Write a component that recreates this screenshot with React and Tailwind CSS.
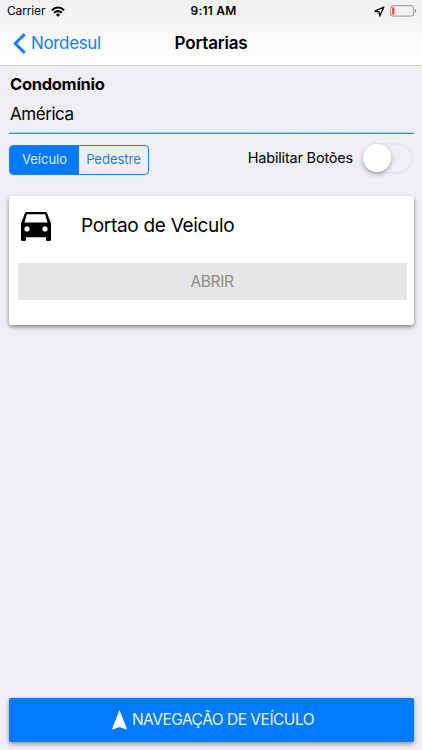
import React from 'react';

const StatusBar = () => (
  <div className="grid h-[22px] grid-cols-3 items-center pl-[7px] pr-[5px] text-[12px]">
    <div className="flex items-center gap-[6px]">
      <span className="tracking-[-0.15px]">Carrier</span>
      <svg width="14" height="11" viewBox="0 0 15 11" preserveAspectRatio="none" fill="none" stroke="black" strokeWidth="2.1">
        <path d="M1 4.2a9.3 9.3 0 0 1 13 0" />
        <path d="M3.4 6.8a5.8 5.8 0 0 1 8.2 0" />
        <path d="M7.5 10.9 5.3 8.6a3.2 3.2 0 0 1 4.4 0z" fill="black" stroke="none" />
      </svg>
    </div>
    <span className="pl-[3px] text-center font-semibold tracking-[0.2px]">9:11 AM</span>
    <div className="flex items-center justify-end gap-[5px]">
      <svg width="11" height="11" viewBox="0 0 11 11" fill="none" stroke="black" strokeWidth="1.3" strokeLinejoin="round">
        <path d="M9.9 1 .9 5.2l4.100.8.700 4.100z" />
      </svg>
      <svg width="27" height="12" viewBox="0 0 27 12">
        <rect x="0.7" y="0.7" width="23" height="10.4" rx="2.4" fill="none" stroke="#929292" />
        <rect x="2.2" y="2.3" width="2.2" height="7.2" rx="0.6" fill="#ff3b30" />
        <path d="M25 4c1.5.6 1.5 3.2 0 3.8z" fill="#929292" />
      </svg>
    </div>
  </div>
);

const NavBar = () => (
  <div className="grid h-[43px] grid-cols-3 items-center px-[13px]">
    <div className="flex items-center gap-[5px] text-[#157efb]">
      <svg width="13" height="21" viewBox="0 0 13 21" fill="none" stroke="currentColor" strokeWidth="2.9">
        <path d="M11.7 1.1 2.2 10.5l9.5 9.4" />
      </svg>
      <span className="text-[17px] tracking-[-0.35px]">Nordesul</span>
    </div>
    <h1 className="text-center text-[17px] font-semibold tracking-[-0.2px]">Portarias</h1>
  </div>
);

const CarIcon = () => (
  <svg width="30" height="29" viewBox="0 0 30 29">
    <path
      fillRule="evenodd"
      d="M6 0h18c1.200 0 2 .6 2.300 1.700L30 11.500v15.900c0 .9-.6 1.500-1.500 1.500h-2c-.9 0-1.500-.6-1.500-1.500V25.300H5v2.100c0 .9-.6 1.500-1.500 1.500h-2C.6 28.900 0 28.300 0 27.400V11.500L3.700 1.700C4 .6 4.800 0 6 0zM5.900 2.300 3.500 10.600h23l-2.400-8.300zM6 14.300a2.600 2.600 0 1 0 0 5.200 2.600 2.600 0 1 0 0-5.200zM24 14.300a2.600 2.600 0 1 0 0 5.200 2.600 2.600 0 1 0 0-5.200z"
    />
  </svg>
);

const App = () => {
  return (
    <div className="flex h-[750px] w-[422px] flex-col overflow-hidden whitespace-nowrap bg-[#efeef4] font-['Inter',sans-serif] text-black">
      <header className="h-[66px] border-b border-[#d0d0d3] bg-linear-to-b from-[#f0f0f0] to-white">
        <StatusBar />
        <NavBar />
      </header>

      <main className="flex flex-1 flex-col pr-[8px] pl-[9px]">
        {/* Condominium */}
        <div className="h-[66px] pt-[6px]">
          <p className="pl-px text-[16.5px] font-bold leading-[24px] tracking-[-0.3px]">Condomínio</p>
          <p className="mt-[6px] pl-px text-[17px] leading-[24px] tracking-[-0.45px]">América</p>
        </div>
        <div className="h-[2px] border-t border-[#a9ccf3] bg-[#388ff0]" />

        {/* Filter and switch */}
        <div className="flex h-[62px] justify-between pt-[8px]">
          <div className="mt-[3px] flex h-[30px] w-[140px] overflow-hidden rounded-[4px] border border-[#157efb] text-[13px]">
            <button className="w-[69px] bg-[#007aff] text-[#e2f1ff]">Veículo</button>
            <button className="flex-1 text-[#157efb]">Pedestre</button>
          </div>
          <div className="mr-px flex h-[32px] items-center gap-[9px]">
            <span className="text-[14.5px] tracking-[-0.2px]">Habilitar Botões</span>
            <div className="h-[31px] w-[51px] rounded-full border-2 border-[#e6e5ea]">
              <div className="-mt-px -ml-px size-[28px] rounded-full bg-white shadow-[0_2px_5px_rgba(0,0,0,0.3)]" />
            </div>
          </div>
        </div>

        {/* Gate */}
        <section className="h-[129px] rounded-[3px] bg-white pr-[7px] pl-[9px] pt-[9px] shadow-[0_2px_4px_rgba(0,0,0,0.45)]">
          <div className="flex h-[43px] items-center pl-[3px]">
            <CarIcon />
            <span className="ml-[30px] text-[19px] tracking-[-0.3px]">Portao de Veiculo</span>
          </div>
          <button className="mt-[15px] h-[37px] w-full bg-[#e6e6e6] pr-px text-[15.5px] tracking-[-0.4px] text-[#8b8b8b]">ABRIR</button>
        </section>

        <button className="mt-auto mb-[8px] flex h-[44px] items-center justify-center gap-[5px] rounded-[2px] bg-[#007aff] pl-[3px] text-[15.5px] text-[#eaf5ff] shadow-[0_2px_4px_rgba(0,0,0,0.4)]">
          <svg width="15" height="20" viewBox="0 0 15 20" fill="white">
            <path d="M7.500 0 15 19 14.300 19.500 7.500 17 .7 19.500 0 19z" />
          </svg>
          <span className="tracking-[-0.5px]">NAVEGAÇÃO DE VEÍCULO</span>
        </button>
      </main>
    </div>
  );
};

export default App;
